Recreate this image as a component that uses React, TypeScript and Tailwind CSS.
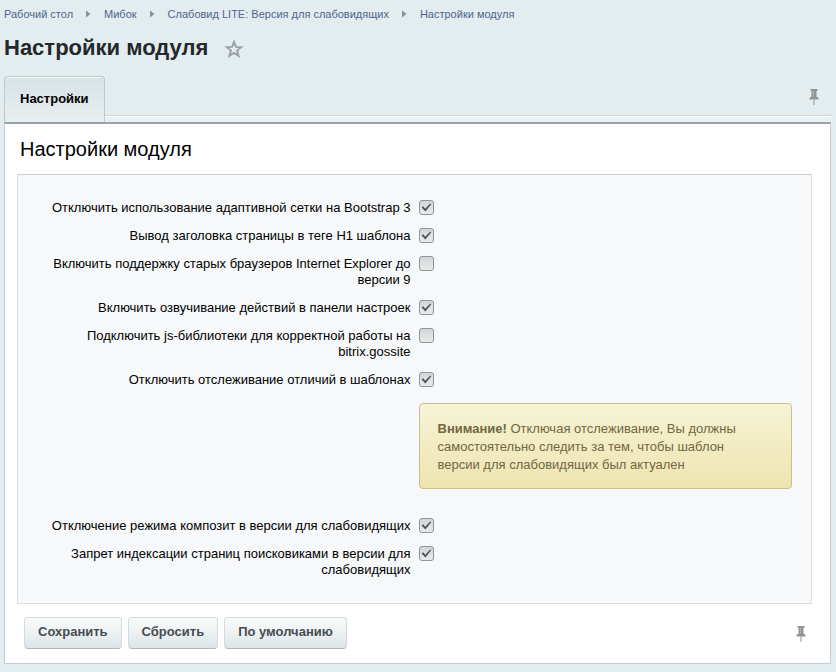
import { Fragment } from 'react';

const crumbs = ['Рабочий стол', 'Мибок', 'Слабовид LITE: Версия для слабовидящих', 'Настройки модуля'];

const options = [
  { id: 'bootstrap', label: 'Отключить использование адаптивной сетки на Bootstrap 3', checked: true },
  { id: 'h1', label: 'Вывод заголовка страницы в теге H1 шаблона', checked: true },
  { id: 'ie', label: 'Включить поддержку старых браузеров Internet Explorer до версии 9', checked: false },
  { id: 'voice', label: 'Включить озвучивание действий в панели настроек', checked: true },
  { id: 'gossite', label: 'Подключить js-библиотеки для корректной работы на bitrix.gossite', checked: false },
  { id: 'diff', label: 'Отключить отслеживание отличий в шаблонах', checked: true, note: true },
  { id: 'composite', label: 'Отключение режима композит в версии для слабовидящих', checked: true },
  { id: 'noindex', label: 'Запрет индексации страниц поисковиками в версии для слабовидящих', checked: true },
];

const buttons = ['Сохранить', 'Сбросить', 'По умолчанию'];

function Pin() {
  return (
    <svg width="10" height="17" viewBox="0 0 10 17" aria-hidden="true">
      <path d="M1.5 0h7v1.5l-1 .5v5.5L9.5 9v1.5h-9V9l2-1.5V2l-1-.5z" fill="#8f9496" />
      <path d="M4 2h1v5.5H4z" fill="#adb2b3" />
      <path d="M4.5 10.5h1V16h-1z" fill="#8f9496" />
    </svg>
  );
}

function Checkbox({ id, checked }: { id: string; checked: boolean }) {
  return (
    <span className="relative block size-[15px]">
      <input
        id={id}
        type="checkbox"
        defaultChecked={checked}
        className="peer block size-[15px] appearance-none rounded-[3px] border border-[#8f9496] bg-linear-to-b from-[#d2d5d6] to-[#e9ebeb]"
      />
      <svg
        viewBox="0 0 15 15"
        className="pointer-events-none absolute inset-0 hidden size-[15px] peer-checked:block"
        aria-hidden="true"
      >
        <path d="M2.6 7.4l1.6-1.2 2 2.5 5-5.2 1 .8-5.8 7.3z" fill="#4b5052" />
      </svg>
    </span>
  );
}

function Note() {
  return (
    <div className="col-start-2 pt-[9px] pb-[23px] pl-1">
      <div className="rounded border border-[#c9c08d] bg-linear-to-b from-[#f6f4d6] to-[#eee4b0] pt-4 pr-10 pb-[14px] pl-[18px] text-[13px] leading-[18px] text-[#716741]">
        <b>Внимание!</b> Отключая отслеживание, Вы должны самостоятельно следить за тем, чтобы шаблон версии для
        слабовидящих был актуален
      </div>
    </div>
  );
}

export default function App() {
  return (
    <div className="min-h-screen bg-[#e3ecee] pr-[5px] pb-2 pl-1 font-['Liberation_Sans',Arial,sans-serif] text-black">
      <nav className="flex h-7 items-center text-[11px] text-[#4f6590]">
        {crumbs.map((crumb, idx) => (
          <Fragment key={crumb}>
            {idx > 0 && (
              <svg width="5" height="8" viewBox="0 0 5 8" className="mx-[13px]" aria-hidden="true">
                <path d="M0 .5L4.500 4 0 7.500z" fill="#87939a" />
              </svg>
            )}
            <a href="#">{crumb}</a>
          </Fragment>
        ))}
      </nav>

      <header className="flex h-12 items-start gap-4 pt-1">
        <h1 className="text-[22px] leading-8 font-bold text-[#22282b]">Настройки модуля</h1>
        <button type="button" aria-label="Добавить в избранное" className="flex h-[34px] items-center">
          <svg width="20" height="18" viewBox="0 0 20 18" aria-hidden="true">
            <path
              d="M10 2l1.9 4.9 5.3.3-4.100 3.400 1.400 5.100L10 12.900l-4.500 2.800 1.400-5.100-4.100-3.400 5.300-.3z"
              fill="none"
              stroke="#9ba3a6"
              strokeWidth="2"
            />
          </svg>
        </button>
      </header>

      <div className="flex">
        <button
          type="button"
          className="h-[46px] rounded-t border border-b-0 border-[#bdc8cb] bg-linear-to-b from-[#d8e1e4] to-[#e7eff1] px-[15px] pb-[2px] text-[13px] font-bold shadow-[inset_0_1px_0_#f7fafa]"
        >
          Настройки
        </button>
        <div className="flex flex-1 flex-col">
          <div className="flex h-10 items-center justify-end border-b border-[#cbd5d8] pt-[3px] pr-3">
            <button type="button" aria-label="Закрепить вкладки">
              <Pin />
            </button>
          </div>
          <div className="h-[6px] border-t border-white bg-[#e9f1f2]" />
        </div>
      </div>

      <form className="border border-t-2 border-[#c3ced2] border-t-[#98a3a7] bg-white pb-[14px]">
        <h2 className="px-[15px] pt-2 pb-2 text-[20px] leading-[34px]">Настройки модуля</h2>

        <div className="mr-[18px] ml-3 grid grid-cols-2 border border-[#d9e0e2] border-t-[#c8cfd1] bg-[#f6f8f9] px-[19px] py-[19px]">
          {options.map((option) => (
            <Fragment key={option.id}>
              <label htmlFor={option.id} className="py-[6px] pr-1 text-right text-[13px] leading-4">
                {option.label}
              </label>
              <div className="py-[6px] pl-1">
                <Checkbox id={option.id} checked={option.checked} />
              </div>
              {option.note && <Note />}
            </Fragment>
          ))}
        </div>

        <div className="flex items-center justify-between pt-[13px] pr-6 pl-[19px]">
          <div className="flex gap-[6px]">
            {buttons.map((name) => (
              <button
                key={name}
                type="button"
                className="h-8 rounded border border-[#d3dbde] border-b-[#aeb8bc] bg-linear-to-b from-[#fbfcfc] to-[#dde5e8] px-[13px] pb-[2px] text-[13px] font-bold text-[#464d50]"
              >
                {name}
              </button>
            ))}
          </div>
          <button type="button" aria-label="Закрепить кнопки" className="pt-[2px]">
            <Pin />
          </button>
        </div>
      </form>
    </div>
  );
}
